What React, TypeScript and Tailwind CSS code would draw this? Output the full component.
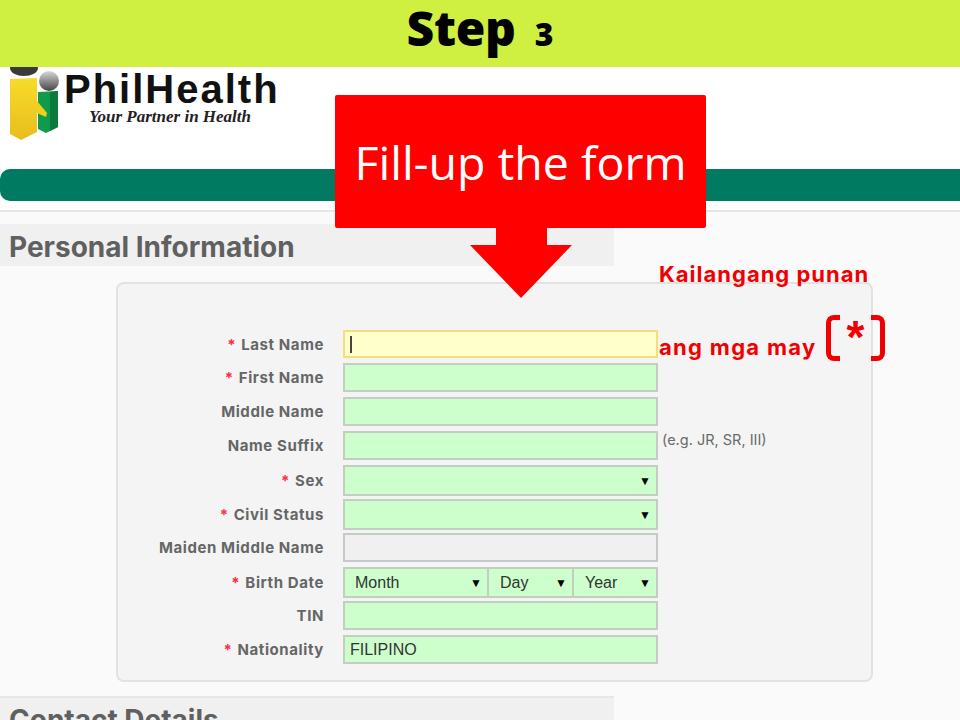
const labelFont = "font-['Inter','Liberation_Sans',sans-serif]";

const rows = [
  { label: 'Last Name', req: true, box: 'h-[28px] mb-[5px]', kind: 'focus' },
  { label: 'First Name', req: true, box: 'h-[29px] mb-[5px]', kind: 'text' },
  { label: 'Middle Name', req: false, box: 'h-[29px] mb-[5px]', kind: 'text' },
  { label: 'Name Suffix', req: false, box: 'h-[29px] mb-[5px]', kind: 'suffix' },
  { label: 'Sex', req: true, box: 'h-[31px] mb-[3px]', kind: 'select' },
  { label: 'Civil Status', req: true, box: 'h-[31px] mb-[3px]', kind: 'select' },
  { label: 'Maiden Middle Name', req: false, box: 'h-[29px] mb-[5px]', kind: 'disabled' },
  { label: 'Birth Date', req: true, box: 'h-[31px] mb-[3px]', kind: 'date' },
  { label: 'TIN', req: false, box: 'h-[29px] mb-[5px]', kind: 'text' },
  { label: 'Nationality', req: true, box: 'h-[29px] mb-0', kind: 'nationality' },
];

const Arrow = () => <span className="text-[12px] leading-none text-black">▼</span>;

const Field = ({ kind }: { kind: string }) => {
  const base = 'h-full border-2 border-[#c4cdc2] bg-[#ccffcc] w-full';
  if (kind === 'focus')
    return (
      <div className="h-full w-full border-2 border-[#f5df7a] bg-[#ffffcc] flex items-center pl-[5px]">
        <div className="w-[2px] h-[17px] bg-[#444]" />
      </div>
    );
  if (kind === 'disabled') return <div className="h-full w-full border-2 border-[#c8c8c8] bg-[#f0f0f0]" />;
  if (kind === 'select')
    return (
      <div className={`${base} flex items-center justify-end pr-[5px]`}>
        <Arrow />
      </div>
    );
  if (kind === 'date')
    return (
      <div className="h-full w-full flex text-[16px] text-[#333] font-['Liberation_Sans',sans-serif]">
        <div className="w-[146px] h-full border-2 border-[#c4cdc2] bg-[#ccffcc] flex items-center justify-between pl-[10px] pr-[5px]">
          <span className="pt-[1px]">Month</span>
          <Arrow />
        </div>
        <div className="w-[85px] h-full border-2 border-l-0 border-[#c4cdc2] bg-[#ccffcc] flex items-center justify-between pl-[11px] pr-[5px]">
          <span className="pt-[1px]">Day</span>
          <Arrow />
        </div>
        <div className="w-[84px] h-full border-2 border-l-0 border-[#c4cdc2] bg-[#ccffcc] flex items-center justify-between pl-[11px] pr-[5px]">
          <span className="pt-[1px]">Year</span>
          <Arrow />
        </div>
      </div>
    );
  if (kind === 'nationality')
    return (
      <div className={`${base} flex items-center pl-[5px] pt-[1px] text-[16px] text-[#333] font-['Liberation_Sans',sans-serif]`}>
        FILIPINO
      </div>
    );
  return <div className={base} />;
};

const Logo = () => (
  <div className="h-[102px] flex items-start pl-[10px]">
    <svg width="54" height="74" viewBox="0 0 54 74" className="shrink-0">
      <defs>
        <linearGradient id="ball" x1="0" y1="0" x2="0" y2="1">
          <stop offset="0" stopColor="#d8d8d8" />
          <stop offset="1" stopColor="#444" />
        </linearGradient>
        <linearGradient id="gold" x1="0" y1="0" x2="0" y2="1">
          <stop offset="0" stopColor="#f7dc2a" />
          <stop offset="1" stopColor="#e8bd1c" />
        </linearGradient>
      </defs>
      <ellipse cx="14" cy="1" rx="14" ry="8" fill="#3a3a3a" />
      <circle cx="39" cy="14" r="10" fill="url(#ball)" />
      <path d="M28 25 L48 24 L48 60 L36 66 L28 62 Z" fill="#0f9a4c" />
      <path d="M40 25 L48 24 L48 60 L40 64 Z" fill="#0b7a3c" />
      <path d="M0 12 L27 11 L27 65 L11 73 L0 67 Z" fill="url(#gold)" />
      <path d="M27 34 L37 46 L36 50 L27 46 Z" fill="#f2cf1b" />
    </svg>
    <div className="pt-[3px]">
      <div className="font-['Liberation_Sans',sans-serif] font-bold text-[40px] tracking-[2px] leading-[38px] text-[#111] w-[216px]">
        PhilHealth
      </div>
      <div className="font-['Liberation_Serif',serif] font-bold italic text-[17px] leading-[14px] mt-[2px] text-[#222] pl-[25px] whitespace-nowrap">
        Your Partner in Health
      </div>
    </div>
  </div>
);

export default function App() {
  return (
    <div className="relative w-[960px] h-[720px] overflow-hidden bg-[#fafafa]">
      {/* top band */}
      <div className="h-[67px] bg-[#cff041] flex items-baseline justify-center font-['Open_Sans',sans-serif] font-extrabold text-black">
        <span className="text-[48px] leading-[56px] tracking-[-0.3px]">Step</span>
        <span className="text-[32px] leading-[56px] ml-[19px]">3</span>
      </div>

      {/* site header */}
      <div className="bg-white">
        <Logo />
        <div className="h-[32px] bg-[#007a61] rounded-l-[10px]" />
      </div>
      <div className="h-[9px] bg-[#fdfdfd]" />

      <div className="border-t-2 border-[#e6e6e6] pt-[12px]">
        <div className={`h-[42px] w-[614px] bg-[#f0f0f0] flex items-center pl-[9px] pt-[3px] text-[28px] font-bold text-[#606060] whitespace-nowrap ${labelFont}`}>
          Personal Information
        </div>

        <div className="ml-[116px] mt-[16px] w-[757px] h-[400px] bg-[#f4f4f4] border-2 border-[#e2e2e2] rounded-[8px] pt-[46px]">
          {rows.map((r) => (
            <div key={r.label} className={`flex ${r.box}`}>
              <div className={`w-[206px] shrink-0 text-right text-[15px] pt-[2px] tracking-[0.6px] font-bold text-[#666] self-center whitespace-nowrap ${labelFont}`}>
                {r.req && <span className="text-[#ff2a44] mr-[5px]">*</span>}
                {r.label}
              </div>
              <div className="w-[315px] ml-[19px] shrink-0 h-full">
                <Field kind={r.kind} />
              </div>
              {r.kind === 'suffix' && (
                <div className={`ml-[4px] text-[14.5px] text-[#6a6a6a] leading-[18px] whitespace-nowrap ${labelFont}`}>(e.g. JR, SR, III)</div>
              )}
            </div>
          ))}
        </div>

        <div className="mt-[14px] border-t-2 border-[#e6e6e6] h-[40px] w-[614px] bg-[#f0f0f0] pl-[9px] pt-[6px] text-[28px] leading-[30px] font-bold text-[#606060]">
          <span className={labelFont}>Contact Details</span>
        </div>
      </div>

      {/* callout */}
      <div className="absolute left-[335px] top-[95px] w-[371px] flex flex-col items-center">
        <div className="w-full h-[133px] bg-[#ff0000] rounded-[2px] flex items-center justify-center text-white text-[46.5px] pt-[2px] font-['Open_Sans',sans-serif]">
          Fill-up the form
        </div>
        <svg width="104" height="71" viewBox="0 0 104 71" className="block">
          <path d="M27 0 H78 V17 H103 L52 70 L1 17 H27 Z" fill="#ff0000" />
        </svg>
      </div>

      {/* note */}
      <div className={`absolute left-[659px] top-[261px] text-[22px] tracking-[1px] leading-[26px] font-bold text-[#f00000] whitespace-nowrap ${labelFont}`}>
        Kailangang punan
      </div>
      <div className={`absolute left-[659px] top-[334px] text-[22px] tracking-[1.3px] leading-[26px] font-bold text-[#f00000] whitespace-nowrap ${labelFont}`}>
        ang mga may
      </div>
      <div className="absolute left-[826px] top-[315px] w-[59px] h-[46px]">
        <div className="absolute left-0 top-0 w-[14px] h-full border-[5px] border-r-0 border-[#f00000] rounded-l-[8px]" />
        <div className="absolute right-0 top-0 w-[14px] h-full border-[5px] border-l-0 border-[#f00000] rounded-r-[8px]" />
        <div className="absolute left-0 right-0 top-[-3px] text-center text-[46px] leading-[50px] font-bold text-[#f00000] font-['Liberation_Sans',sans-serif]">
          *
        </div>
      </div>
    </div>
  );
}
